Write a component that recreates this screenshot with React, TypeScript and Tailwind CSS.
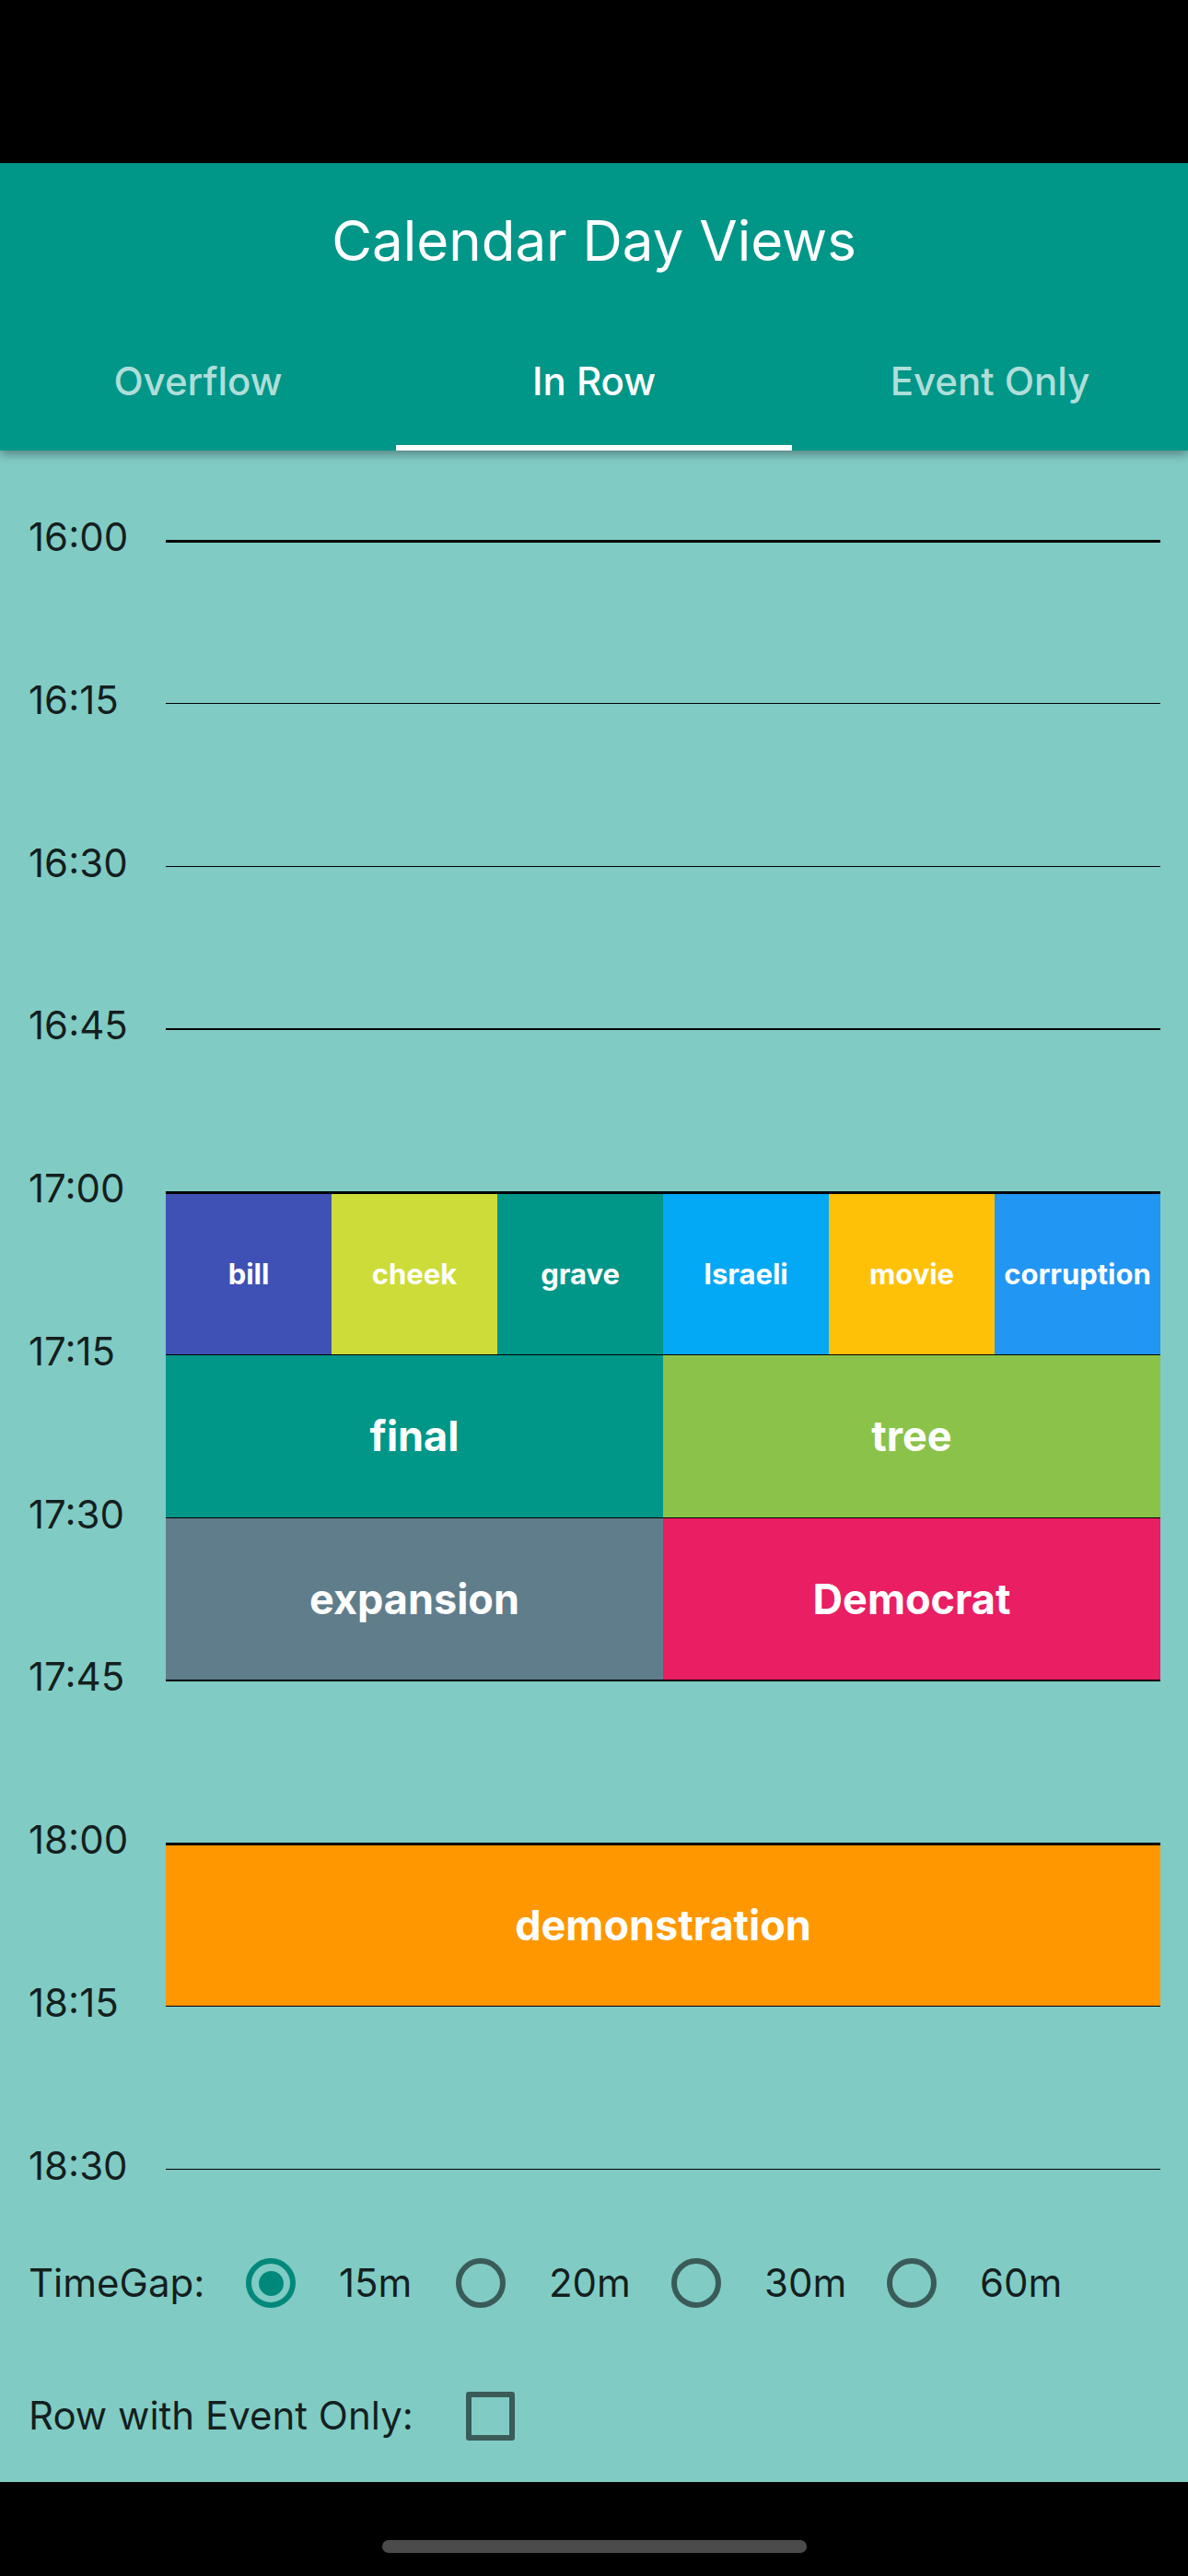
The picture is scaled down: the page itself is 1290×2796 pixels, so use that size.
import { useState } from "react";

interface CalEvent {
  title: string;
  color: string;
}

interface Slot {
  time: string;
  hour: boolean;
  small?: boolean;
  events: CalEvent[];
}

const slots: Slot[] = [
  { time: "16:00", hour: true, events: [] },
  { time: "16:15", hour: false, events: [] },
  { time: "16:30", hour: false, events: [] },
  { time: "16:45", hour: false, events: [] },
  {
    time: "17:00",
    hour: true,
    small: true,
    events: [
      { title: "bill", color: "bg-[#3F51B5]" },
      { title: "cheek", color: "bg-[#CDDC39]" },
      { title: "grave", color: "bg-[#009688]" },
      { title: "Israeli", color: "bg-[#03A9F4]" },
      { title: "movie", color: "bg-[#FFC107]" },
      { title: "corruption", color: "bg-[#2196F3]" },
    ],
  },
  {
    time: "17:15",
    hour: false,
    events: [
      { title: "final", color: "bg-[#009688]" },
      { title: "tree", color: "bg-[#8BC34A]" },
    ],
  },
  {
    time: "17:30",
    hour: false,
    events: [
      { title: "expansion", color: "bg-[#607D8B]" },
      { title: "Democrat", color: "bg-[#E91E63]" },
    ],
  },
  { time: "17:45", hour: false, events: [] },
  {
    time: "18:00",
    hour: true,
    events: [{ title: "demonstration", color: "bg-[#FF9800]" }],
  },
  { time: "18:15", hour: false, events: [] },
];

const tabs = ["Overflow", "In Row", "Event Only"];
const gaps = [
  { label: "15m", width: "w-[84px]" },
  { label: "20m", width: "w-[90px]" },
  { label: "30m", width: "w-[90px]" },
  { label: "60m", width: "w-[90px]" },
];

const TimeRow = ({ slot }: { slot: Slot }) => (
  <div className="flex h-[176.75px]">
    <div className="w-[180px] shrink-0 pl-[31px] -mt-[24px] text-[42px] leading-none text-black/85">
      {slot.time}
    </div>
    <div className="mr-[30px] flex flex-1 flex-col">
      <div className={slot.hour ? "h-[3px] bg-black" : "h-[1.5px] bg-black"} />
      <div className="flex flex-1">
        {slot.events.map((ev) => (
          <div
            key={ev.title}
            className={`flex flex-1 items-center justify-center font-bold leading-none text-white ${ev.color} ${
              slot.small ? "text-[31px]" : "text-[45px]"
            }`}
          >
            {ev.title}
          </div>
        ))}
      </div>
    </div>
  </div>
);

const Radio = ({ checked }: { checked: boolean }) => (
  <div className="flex w-[144px] shrink-0 items-center justify-center">
    <span
      className={`flex h-[54px] w-[54px] items-center justify-center rounded-full border-[6px] ${
        checked ? "border-[#00897B]" : "border-black/55"
      }`}
    >
      {checked && <span className="block h-[27px] w-[27px] rounded-full bg-[#00897B]" />}
    </span>
  </div>
);

const App = () => {
  const [tab] = useState(1);
  const [gap] = useState(0);

  return (
    <div className="flex h-[2796px] w-[1290px] flex-col bg-black font-['Inter','Noto_Sans',sans-serif]">
      {/* status bar */}
      <div className="h-[177px] shrink-0 bg-black" />

      {/* app bar + tabs */}
      <div className="relative z-10 shrink-0 bg-[#009688] shadow-[0_4px_10px_rgba(0,0,0,0.35)]">
        <div className="flex h-[168px] items-center justify-center text-[60px] leading-none text-white">
          Calendar Day Views
        </div>
        <div className="grid h-[144px] grid-cols-3">
          {tabs.map((t, i) => (
            <div key={t} className="flex flex-col">
              <div
                className={`flex flex-1 items-center justify-center text-[42px] font-medium leading-none ${
                  i === tab ? "text-white" : "text-white/70"
                }`}
              >
                {t}
              </div>
              <div className={i === tab ? "h-[6px] bg-white" : "h-[6px]"} />
            </div>
          ))}
        </div>
      </div>

      {/* day view */}
      <div className="flex flex-1 flex-col bg-[#80CBC4] pt-[97px]">
        {slots.map((s) => (
          <TimeRow key={s.time} slot={s} />
        ))}
        <div className="flex h-[52.5px]">
          <div className="w-[180px] shrink-0 pl-[31px] -mt-[24px] text-[42px] leading-none text-black/85">
            18:30
          </div>
          <div className="mr-[30px] flex-1">
            <div className="h-[1.5px] bg-black" />
          </div>
        </div>

        <div className="flex h-[144px] items-center pl-[31px] text-[42px] leading-none text-black/85">
          <span className="w-[191px]">TimeGap:</span>
          {gaps.map((g, i) => (
            <div key={g.label} className="flex items-center">
              <Radio checked={i === gap} />
              <span className={`${g.width} pl-[2px]`}>{g.label}</span>
            </div>
          ))}
        </div>

        <div className="flex h-[144px] items-center pl-[31px] text-[42px] leading-none text-black/85">
          <span>Row with Event Only:</span>
          <span className="ml-[57px] block h-[53px] w-[53px] rounded-[3px] border-[6px] border-black/55" />
        </div>
      </div>

      {/* nav bar */}
      <div className="flex h-[102px] shrink-0 justify-center bg-black pt-[63px]">
        <div className="h-[14px] w-[461px] rounded-full bg-[#4b4b4b]" />
      </div>
    </div>
  );
};

export default App;
